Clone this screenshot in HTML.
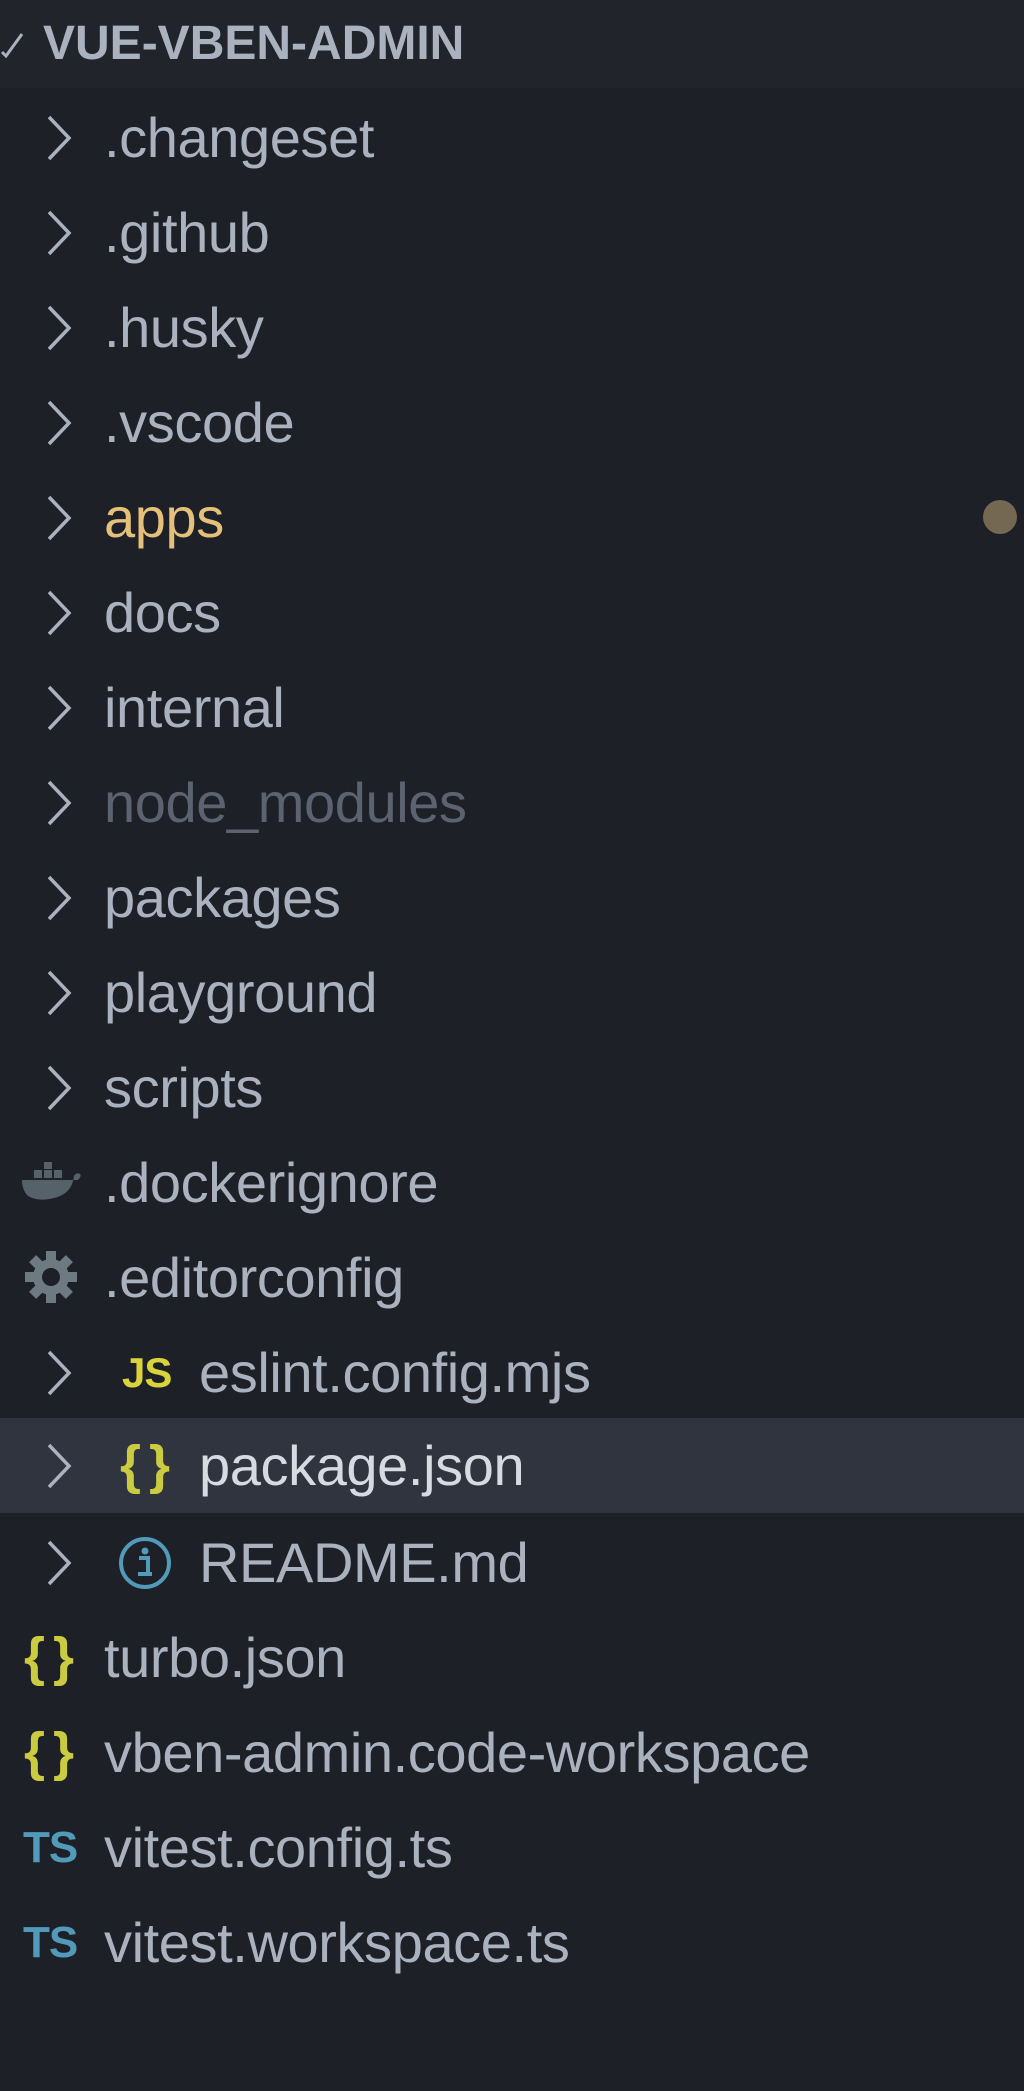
<!DOCTYPE html>
<html><head><meta charset="utf-8"><style>
html,body{margin:0;padding:0;}
body{width:1024px;height:2091px;background:#1e2027;position:relative;overflow:hidden;font-family:"Liberation Sans",sans-serif;}
.hdr{position:absolute;left:0;top:0;width:1024px;height:88px;background:#21252b;}
.hdr .t{position:absolute;left:43px;top:0;line-height:88px;font-size:48px;font-weight:bold;color:#abb2bf;letter-spacing:0px;}
.row{position:absolute;left:0;width:1024px;height:95px;line-height:95px;font-size:56px;color:#abb2bf;letter-spacing:-0.4px;white-space:nowrap;}
.row .tx{position:absolute;left:104px;top:0;}
.row.ind .tx{left:199px;}
.chev{position:absolute;left:44px;top:25px;width:32px;height:46px;}
.ic{position:absolute;top:0;}
.br{font-size:54px;font-weight:bold;color:#cbcb41;letter-spacing:8px;}
.ts{font-size:44px;font-weight:bold;color:#519aba;letter-spacing:-1px;}
.sel{background:#2f343f;}
</style></head><body>
<div class="hdr">
<svg style="position:absolute;left:0;top:30px" width="24" height="28"><path d="M2 22 L6 26 L22 4" stroke="#abb2bf" stroke-width="3" fill="none"/></svg>
<div class="t">VUE-VBEN-ADMIN</div>
</div>

<div class="row" style="top:90px"><svg class="chev"><path d="M5 2 L25 23 L5 44" stroke="#abb2bf" stroke-width="3.5" fill="none"/></svg><span class="tx">.changeset</span></div>
<div class="row" style="top:185px"><svg class="chev"><path d="M5 2 L25 23 L5 44" stroke="#abb2bf" stroke-width="3.5" fill="none"/></svg><span class="tx">.github</span></div>
<div class="row" style="top:280px"><svg class="chev"><path d="M5 2 L25 23 L5 44" stroke="#abb2bf" stroke-width="3.5" fill="none"/></svg><span class="tx">.husky</span></div>
<div class="row" style="top:375px"><svg class="chev"><path d="M5 2 L25 23 L5 44" stroke="#abb2bf" stroke-width="3.5" fill="none"/></svg><span class="tx">.vscode</span></div>
<div class="row" style="top:470px"><svg class="chev"><path d="M5 2 L25 23 L5 44" stroke="#abb2bf" stroke-width="3.5" fill="none"/></svg><span class="tx" style="color:#e5c07b">apps</span>
<svg style="position:absolute;left:982px;top:29px" width="36" height="36"><circle cx="18" cy="18" r="17" fill="#756852"/></svg></div>
<div class="row" style="top:565px"><svg class="chev"><path d="M5 2 L25 23 L5 44" stroke="#abb2bf" stroke-width="3.5" fill="none"/></svg><span class="tx">docs</span></div>
<div class="row" style="top:660px"><svg class="chev"><path d="M5 2 L25 23 L5 44" stroke="#abb2bf" stroke-width="3.5" fill="none"/></svg><span class="tx">internal</span></div>
<div class="row" style="top:755px"><svg class="chev"><path d="M5 2 L25 23 L5 44" stroke="#abb2bf" stroke-width="3.5" fill="none"/></svg><span class="tx" style="color:#5c6370">node_modules</span></div>
<div class="row" style="top:850px"><svg class="chev"><path d="M5 2 L25 23 L5 44" stroke="#abb2bf" stroke-width="3.5" fill="none"/></svg><span class="tx">packages</span></div>
<div class="row" style="top:945px"><svg class="chev"><path d="M5 2 L25 23 L5 44" stroke="#abb2bf" stroke-width="3.5" fill="none"/></svg><span class="tx">playground</span></div>
<div class="row" style="top:1040px"><svg class="chev"><path d="M5 2 L25 23 L5 44" stroke="#abb2bf" stroke-width="3.5" fill="none"/></svg><span class="tx">scripts</span></div>

<div class="row" style="top:1135px"><svg style="position:absolute;left:20px;top:27px" width="62" height="42"><path d="M2 18 L58 18 Q62 14 60 12 Q56 10 54 14 Q52 32 34 36 Q18 40 8 34 Q2 28 2 18 Z" fill="#55626a"/><rect x="14" y="8" width="8" height="8" fill="#55626a"/><rect x="24" y="8" width="8" height="8" fill="#55626a"/><rect x="34" y="8" width="8" height="8" fill="#55626a"/><rect x="24" y="0" width="8" height="7" fill="#55626a"/></svg><span class="tx">.dockerignore</span></div>
<div class="row" style="top:1230px"><svg style="position:absolute;left:25px;top:21px" width="52" height="52" viewBox="0 0 52 52"><g fill="#6d7a82"><circle cx="26" cy="26" r="18"/><rect x="21" y="0" width="10" height="52"/><rect x="0" y="21" width="52" height="10"/><rect x="21" y="0" width="10" height="52" transform="rotate(45 26 26)"/><rect x="21" y="0" width="10" height="52" transform="rotate(-45 26 26)"/></g><circle cx="26" cy="26" r="9" fill="#1e2027"/></svg><span class="tx">.editorconfig</span></div>
<div class="row ind" style="top:1325px"><svg class="chev"><path d="M5 2 L25 23 L5 44" stroke="#abb2bf" stroke-width="3.5" fill="none"/></svg><span class="ic" style="left:122px;font-size:42px;font-weight:bold;color:#d8d43a;letter-spacing:-1px">JS</span><span class="tx">eslint.config.mjs</span></div>
<div class="row ind sel" style="top:1418px"><svg class="chev"><path d="M5 2 L25 23 L5 44" stroke="#abb2bf" stroke-width="3.5" fill="none"/></svg><span class="ic br" style="left:120px">{}</span><span class="tx" style="color:#d7dae0">package.json</span></div>
<div class="row ind" style="top:1515px"><svg class="chev"><path d="M5 2 L25 23 L5 44" stroke="#abb2bf" stroke-width="3.5" fill="none"/></svg><svg style="position:absolute;left:118px;top:21px" width="54" height="54"><circle cx="27" cy="27" r="24" stroke="#519aba" stroke-width="4" fill="none"/><circle cx="27" cy="15" r="3.5" fill="#519aba"/><path d="M21 22 H30 V38 H34 M20 38 H34" stroke="#519aba" stroke-width="4" fill="none"/></svg><span class="tx">README.md</span></div>

<div class="row" style="top:1610px"><span class="ic br" style="left:24px">{}</span><span class="tx">turbo.json</span></div>
<div class="row" style="top:1705px"><span class="ic br" style="left:24px">{}</span><span class="tx">vben-admin.code-workspace</span></div>
<div class="row" style="top:1800px"><span class="ic ts" style="left:23px">TS</span><span class="tx">vitest.config.ts</span></div>
<div class="row" style="top:1895px"><span class="ic ts" style="left:23px">TS</span><span class="tx">vitest.workspace.ts</span></div>
</body></html>
